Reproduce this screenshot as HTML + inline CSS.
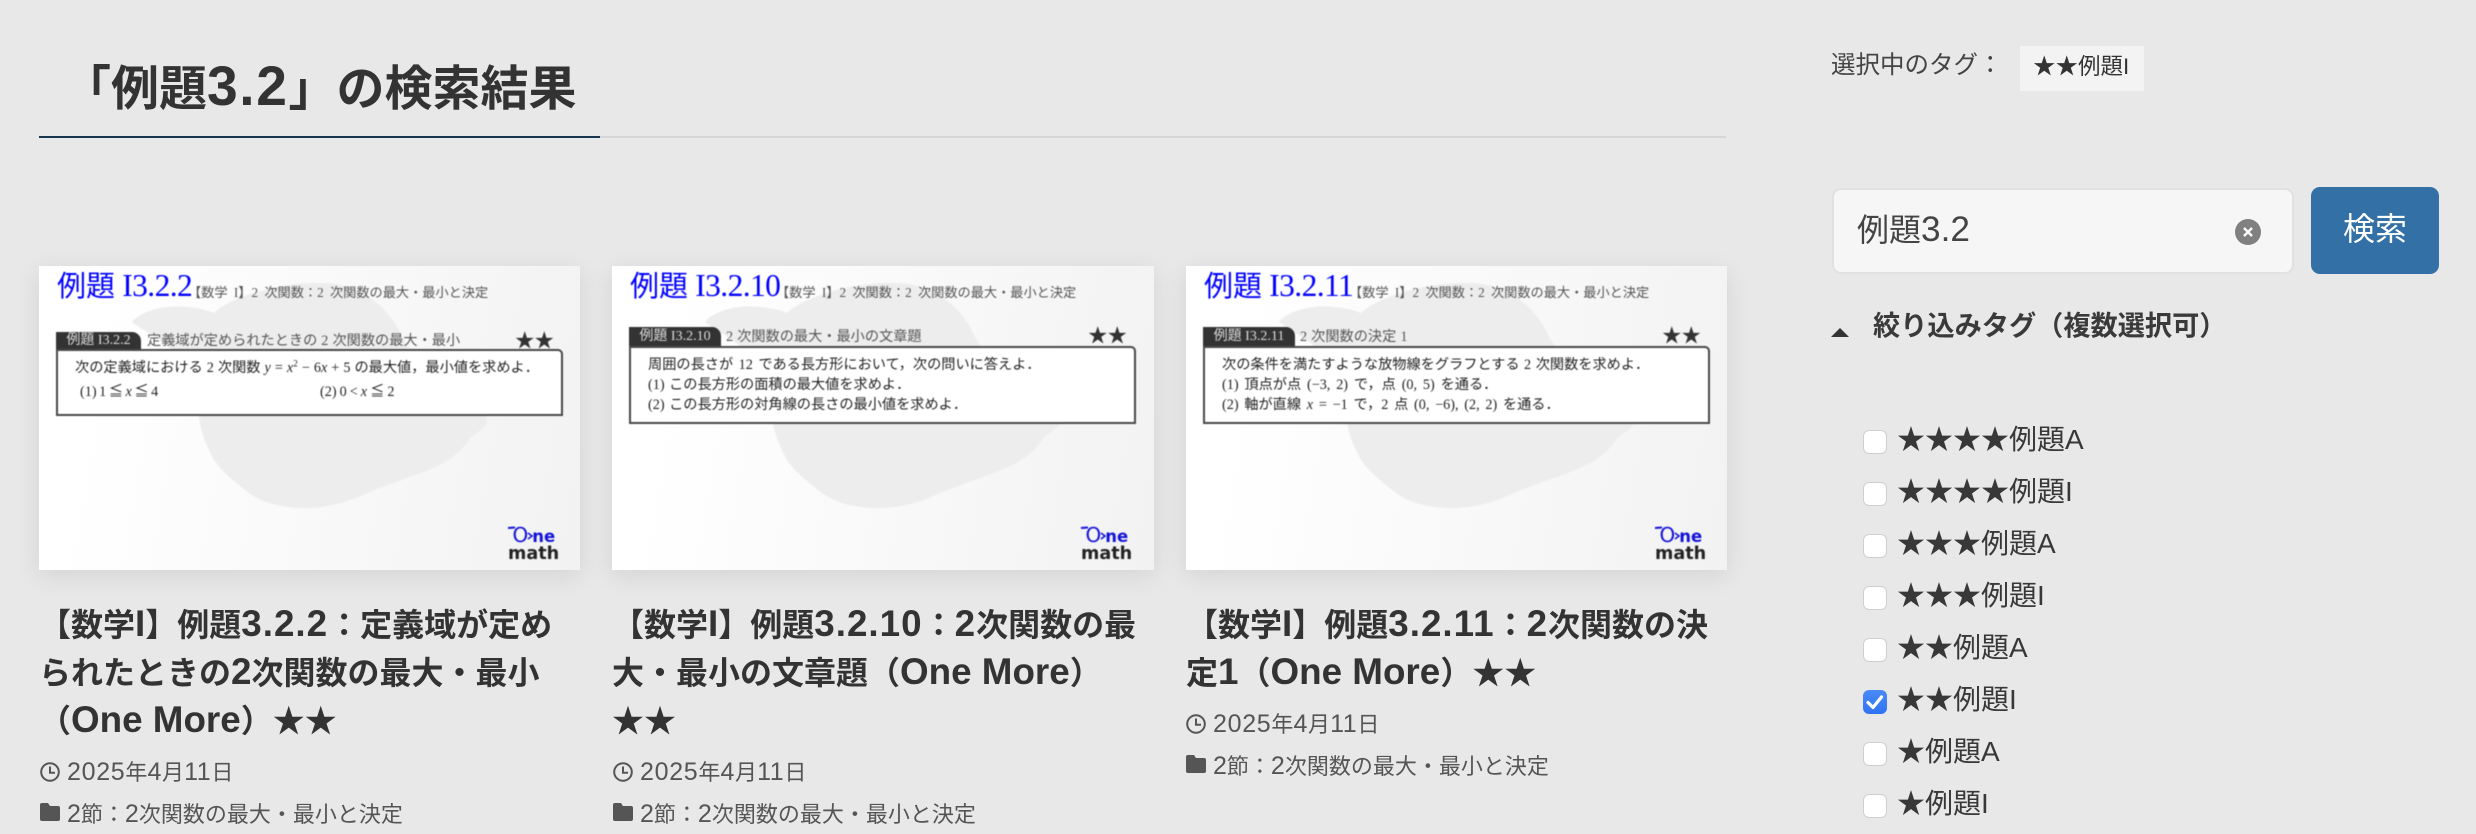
<!DOCTYPE html>
<html lang="ja"><head><meta charset="utf-8"><title>「例題3.2」の検索結果</title>
<style>
html,body{margin:0;padding:0;background:#e8e8e8}
body{width:2476px;height:834px;overflow:hidden;position:relative;font-family:"Liberation Sans","Noto Sans CJK JP",sans-serif;color:#333}
.a{position:absolute;white-space:nowrap}
.n{font-size:1.15em;line-height:0}
.k{letter-spacing:1px}
.card{position:absolute;top:266px;width:541px;height:304px;background:linear-gradient(100deg,#fff 12%,#f2f2f2 100%);box-shadow:0 6px 24px rgba(0,0,0,.09);overflow:hidden}
.inner{position:absolute;inset:0;filter:blur(.45px)}
.blob{position:absolute;left:0;top:0}
.ttl{position:absolute;left:18px;top:1px;font:29px/40px "Liberation Serif","Noto Sans CJK JP",sans-serif;color:#0000ff;white-space:nowrap}
.ttl b{font-weight:normal;font-size:31.5px;letter-spacing:-.6px;line-height:0}
.sub{position:absolute;top:17px;font:13.2px/20px "Liberation Serif","Noto Sans CJK JP",sans-serif;color:#555;white-space:nowrap;word-spacing:3px}
.tab{position:absolute;left:17px;background:#333;color:#ddd;border-radius:0 9px 0 0;font:14px/17px "Liberation Serif","Noto Sans CJK JP",sans-serif;text-align:center;white-space:nowrap}
.st{position:absolute;font:14.2px/20px "Liberation Serif","Noto Sans CJK JP",sans-serif;color:#555;white-space:nowrap;word-spacing:.5px}
.stars{position:absolute;left:476px;font:19.5px/20px "Noto Sans CJK JP",sans-serif;color:#333;white-space:nowrap}
.box{position:absolute;left:17px;width:503px;background:#fff;border:2px solid #484848;border-radius:0 5px 0 0}
.l{position:absolute;font:14.2px/20px "Liberation Serif","Noto Sans CJK JP",sans-serif;color:#222;white-space:nowrap;word-spacing:1px}
.l i{font-family:"Liberation Serif",serif}
.o{position:absolute;left:473.5px;top:258px;font:normal 20px/22px "DejaVu Sans",sans-serif;color:#1212d8;white-space:nowrap}
.o span{font:bold 16.5px/22px "DejaVu Sans",sans-serif;margin-left:4px}
.m{position:absolute;left:469px;top:277px;font:bold 17.6px/22px "DejaVu Sans",sans-serif;color:#222;white-space:nowrap}
.tail{position:absolute;left:468px;top:258px}
.t{position:absolute;font-weight:bold;font-size:32px;line-height:48px;color:#333;white-space:nowrap}
.d{position:absolute;font-size:22px;line-height:32px;color:#555;white-space:nowrap}
.d .n{font-size:25px}
.d .k{letter-spacing:.7px}
.cb{position:absolute;left:1863px;width:22px;height:22px;background:#fff;border:1px solid #cfcfcf;border-radius:6px}
.lb{position:absolute;left:1897px;font-size:28px;line-height:40px;color:#383838;white-space:nowrap}
</style></head><body>

<div class="a" style="left:63px;top:66px;font-size:48px;line-height:48px;font-weight:bold;color:#333">「例題<span class="n" style="letter-spacing:1.6px">3.2</span>」の検索結果</div>
<div class="a" style="left:39px;top:136px;width:1687px;height:2px;background:#d6d6d6"></div>
<div class="a" style="left:39px;top:136px;width:561px;height:2px;background:#1a3550"></div>

<!-- card 1 -->
<div class="card" style="left:39px"><div class="inner">
<svg class="blob" width="541" height="304"><path d="M93 56C100 46 125 38 148 41C160 42 168 44 175 47C190 32 240 15 286 17C320 18 350 40 363 71C375 95 425 120 447 151C452 160 440 165 432 171C420 190 405 198 382 207C360 215 345 220 328 227C305 238 285 242 267 242C245 242 225 238 210 227C195 215 185 208 175 194C165 175 162 165 160 151C158 130 155 110 140 90C125 75 105 65 93 56Z" fill="#ededed"/></svg>
<div class="ttl">例題 <b>I3.2.2</b></div>
<div class="sub" style="left:149px">【数学 I】2 次関数：2 次関数の最大・最小と決定</div>
<div class="tab" style="top:66px;width:85px;height:17px">例題 I3.2.2</div>
<div class="st" style="left:108px;top:65px">定義域が定められたときの 2 次関数の最大・最小</div>
<div class="stars" style="top:63px">★★</div>
<div class="box" style="top:83px;height:63px"></div>
<div class="l" style="left:36px;top:92px;word-spacing:.5px">次の定義域における 2 次関数 <i>y</i> = <i>x</i><sup style="font-size:9px;line-height:0">2</sup> − 6<i>x</i> + 5 の最大値，最小値を求めよ．</div>
<div class="l" style="left:41px;top:116px;word-spacing:-1px">(1) 1 ≦ <i>x</i> ≦ 4</div>
<div class="l" style="left:281px;top:116px;word-spacing:-.5px">(2) 0 &lt; <i>x</i> ≦ 2</div>
<svg class="tail" width="30" height="20"><path d="M1 4L8 3.5" stroke="#1212d8" stroke-width="2" fill="none"/><path d="M21 9L25 12L21 15" stroke="#1212d8" stroke-width="1.6" fill="none"/></svg>
<div class="o">O<span>ne</span></div><div class="m">math</div>
</div></div>

<!-- card 2 -->
<div class="card" style="left:612px;width:542px"><div class="inner">
<svg class="blob" width="541" height="304"><path d="M93 56C100 46 125 38 148 41C160 42 168 44 175 47C190 32 240 15 286 17C320 18 350 40 363 71C375 95 425 120 447 151C452 160 440 165 432 171C420 190 405 198 382 207C360 215 345 220 328 227C305 238 285 242 267 242C245 242 225 238 210 227C195 215 185 208 175 194C165 175 162 165 160 151C158 130 155 110 140 90C125 75 105 65 93 56Z" fill="#ededed"/></svg>
<div class="ttl">例題 <b>I3.2.10</b></div>
<div class="sub" style="left:164px">【数学 I】2 次関数：2 次関数の最大・最小と決定</div>
<div class="tab" style="top:61px;width:92px;height:19px;line-height:19px">例題 I3.2.10</div>
<div class="st" style="left:114px;top:61px">2 次関数の最大・最小の文章題</div>
<div class="stars" style="top:58px">★★</div>
<div class="box" style="top:80px;height:74px"></div>
<div class="l" style="left:36px;top:89px;word-spacing:2px">周囲の長さが 12 である長方形において，次の問いに答えよ．</div>
<div class="l" style="left:36px;top:109px">(1) この長方形の面積の最大値を求めよ．</div>
<div class="l" style="left:36px;top:129px">(2) この長方形の対角線の長さの最小値を求めよ．</div>
<svg class="tail" width="30" height="20"><path d="M1 4L8 3.5" stroke="#1212d8" stroke-width="2" fill="none"/><path d="M21 9L25 12L21 15" stroke="#1212d8" stroke-width="1.6" fill="none"/></svg>
<div class="o">O<span>ne</span></div><div class="m">math</div>
</div></div>

<!-- card 3 -->
<div class="card" style="left:1186px"><div class="inner">
<svg class="blob" width="541" height="304"><path d="M93 56C100 46 125 38 148 41C160 42 168 44 175 47C190 32 240 15 286 17C320 18 350 40 363 71C375 95 425 120 447 151C452 160 440 165 432 171C420 190 405 198 382 207C360 215 345 220 328 227C305 238 285 242 267 242C245 242 225 238 210 227C195 215 185 208 175 194C165 175 162 165 160 151C158 130 155 110 140 90C125 75 105 65 93 56Z" fill="#ededed"/></svg>
<div class="ttl">例題 <b>I3.2.11</b></div>
<div class="sub" style="left:163px">【数学 I】2 次関数：2 次関数の最大・最小と決定</div>
<div class="tab" style="top:61px;width:92px;height:19px;line-height:19px">例題 I3.2.11</div>
<div class="st" style="left:114px;top:61px">2 次関数の決定 1</div>
<div class="stars" style="top:58px">★★</div>
<div class="box" style="top:80px;height:74px"></div>
<div class="l" style="left:36px;top:89px">次の条件を満たすような放物線をグラフとする 2 次関数を求めよ．</div>
<div class="l" style="left:36px;top:109px;word-spacing:2.3px">(1) 頂点が点 (−3, 2) で，点 (0, 5) を通る．</div>
<div class="l" style="left:36px;top:129px;word-spacing:2.2px">(2) 軸が直線 <i>x</i> = −1 で，2 点 (0, −6), (2, 2) を通る．</div>
<svg class="tail" width="30" height="20"><path d="M1 4L8 3.5" stroke="#1212d8" stroke-width="2" fill="none"/><path d="M21 9L25 12L21 15" stroke="#1212d8" stroke-width="1.6" fill="none"/></svg>
<div class="o">O<span>ne</span></div><div class="m">math</div>
</div></div>

<!-- card titles -->
<div class="t" style="left:39px;top:601px">【数学<span class="n">I</span>】例題<span class="n k">3.2.2</span>：定義域が定め<br>られたときの<span class="n">2</span>次関数の最大・最小<br>（<span class="n">One More</span>）★★</div>
<div class="t" style="left:612px;top:601px">【数学<span class="n">I</span>】例題<span class="n k">3.2.10</span>：<span class="n k">2</span>次関数の最<br>大・最小の文章題（<span class="n">One More</span>）<br>★★</div>
<div class="t" style="left:1186px;top:601px">【数学<span class="n">I</span>】例題<span class="n k">3.2.11</span>：<span class="n k">2</span>次関数の決<br>定<span class="n">1</span>（<span class="n">One More</span>）★★</div>

<!-- meta 1 -->
<svg class="a" style="left:40px;top:762px" width="20" height="20" viewBox="0 0 20 20"><circle cx="10" cy="10" r="8.8" fill="none" stroke="#555" stroke-width="2"/><path d="M10 4.5V10.8H15" fill="none" stroke="#555" stroke-width="2"/></svg>
<div class="d" style="left:67px;top:757px"><span class="n k">2025</span>年<span class="n k">4</span>月<span class="n k">11</span>日</div>
<svg class="a" style="left:40px;top:803px" width="20" height="18" viewBox="0 0 20 18"><path d="M0 2Q0 0 2 0H8L10 3H18Q20 3 20 5V16Q20 18 18 18H2Q0 18 0 16Z" fill="#555"/></svg>
<div class="d" style="left:67px;top:799px"><span class="n">2</span>節：<span class="n">2</span>次関数の最大・最小と決定</div>

<!-- meta 2 -->
<svg class="a" style="left:613px;top:762px" width="20" height="20" viewBox="0 0 20 20"><circle cx="10" cy="10" r="8.8" fill="none" stroke="#555" stroke-width="2"/><path d="M10 4.5V10.8H15" fill="none" stroke="#555" stroke-width="2"/></svg>
<div class="d" style="left:640px;top:757px"><span class="n k">2025</span>年<span class="n k">4</span>月<span class="n k">11</span>日</div>
<svg class="a" style="left:613px;top:803px" width="20" height="18" viewBox="0 0 20 18"><path d="M0 2Q0 0 2 0H8L10 3H18Q20 3 20 5V16Q20 18 18 18H2Q0 18 0 16Z" fill="#555"/></svg>
<div class="d" style="left:640px;top:799px"><span class="n">2</span>節：<span class="n">2</span>次関数の最大・最小と決定</div>

<!-- meta 3 -->
<svg class="a" style="left:1186px;top:714px" width="20" height="20" viewBox="0 0 20 20"><circle cx="10" cy="10" r="8.8" fill="none" stroke="#555" stroke-width="2"/><path d="M10 4.5V10.8H15" fill="none" stroke="#555" stroke-width="2"/></svg>
<div class="d" style="left:1213px;top:709px"><span class="n k">2025</span>年<span class="n k">4</span>月<span class="n k">11</span>日</div>
<svg class="a" style="left:1186px;top:755px" width="20" height="18" viewBox="0 0 20 18"><path d="M0 2Q0 0 2 0H8L10 3H18Q20 3 20 5V16Q20 18 18 18H2Q0 18 0 16Z" fill="#555"/></svg>
<div class="d" style="left:1213px;top:751px"><span class="n">2</span>節：<span class="n">2</span>次関数の最大・最小と決定</div>

<!-- sidebar -->
<div class="a" style="left:1831px;top:50px;font-size:24.5px;line-height:32px;color:#444">選択中のタグ：</div>
<div class="a" style="left:2020px;top:46px;width:124px;height:45px;background:#f3f3f3"></div>
<div class="a" style="left:2033px;top:50px;font-size:22.5px;line-height:34px;color:#333">★★例題I</div>

<div class="a" style="left:1832px;top:188px;width:458px;height:82px;background:#f6f6f6;border:2px solid #e1e1e1;border-radius:9px"></div>
<div class="a" style="left:1857px;top:206px;font-size:32px;line-height:48px;color:#444">例題<span class="n" style="font-size:1.1em">3.2</span></div>
<svg class="a" style="left:2235px;top:219px" width="26" height="26" viewBox="0 0 26 26"><circle cx="13" cy="13" r="13" fill="#808080"/><path d="M9 9L17 17M17 9L9 17" stroke="#fff" stroke-width="2.4"/></svg>
<div class="a" style="left:2311px;top:187px;width:128px;height:87px;background:#3270a5;border-radius:9px;color:#fff;font-size:32px;line-height:85px;text-align:center">検索</div>

<svg class="a" style="left:1831px;top:328px" width="18" height="9" viewBox="0 0 18 9"><path d="M9 0L18 9H0Z" fill="#333"/></svg>
<div class="a" style="left:1873px;top:306px;font-size:27.2px;line-height:40px;font-weight:bold;color:#3a3a3a">絞り込みタグ（複数選択可）</div>

<div class="cb" style="top:430px"></div><div class="lb" style="top:420px">★★★★例題A</div>
<div class="cb" style="top:482px"></div><div class="lb" style="top:472px">★★★★例題I</div>
<div class="cb" style="top:534px"></div><div class="lb" style="top:524px">★★★例題A</div>
<div class="cb" style="top:586px"></div><div class="lb" style="top:576px">★★★例題I</div>
<div class="cb" style="top:638px"></div><div class="lb" style="top:628px">★★例題A</div>
<svg class="a" style="left:1863px;top:690px" width="24" height="24" viewBox="0 0 24 24"><defs><linearGradient id="g" x1="0" y1="0" x2="0" y2="1"><stop offset="0" stop-color="#4a8bf8"/><stop offset="1" stop-color="#2f72f3"/></linearGradient></defs><rect width="24" height="24" rx="6" fill="url(#g)"/><path d="M5 12.5L10 17.5L18.5 7" fill="none" stroke="#fff" stroke-width="3.2" stroke-linecap="round" stroke-linejoin="round"/></svg>
<div class="lb" style="top:680px">★★例題I</div>
<div class="cb" style="top:742px"></div><div class="lb" style="top:732px">★例題A</div>
<div class="cb" style="top:794px"></div><div class="lb" style="top:784px">★例題I</div>

</body></html>
